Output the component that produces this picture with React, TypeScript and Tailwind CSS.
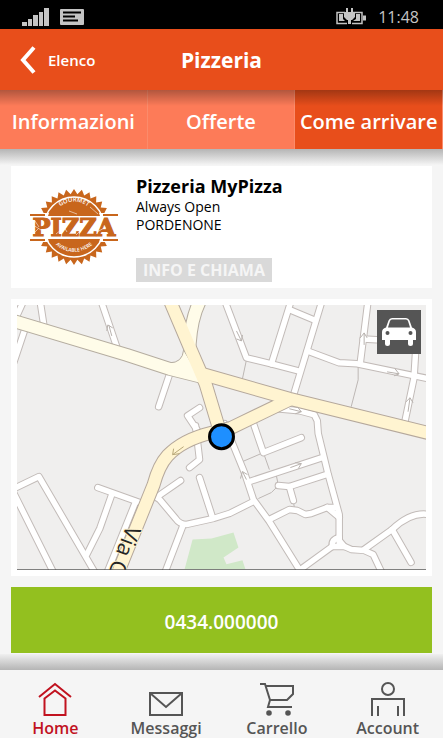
import React, { useState } from "react";

const tabs = ["Informazioni", "Offerte", "Come arrivare"];

// White streets, drawn twice: grey casing first, then the white fill
const streets = [
  "M40 300L44 326",
  "M26 326L14 362",
  "M24 300L14 322",
  "M101 300L118 350",
  "M170 374L159 407",
  "M200 408L188 416L200 434",
  "M225 300L247 358L272 364L299 371",
  "M292 300L272 364",
  "M323 300L294 396",
  "M291 310L315 320",
  "M308 351L340 363L358 364L430 379",
  "M369 300L361 364",
  "M364 339L382 340",
  "M417 345L415 378L405 426",
  "M278 409L300 411L315 415L318 421L319 434L329 475L340 515L340 543",
  "M252 418L264 453L302 438",
  "M225 424L245 473L254 500L270 522L303 575",
  "M250 482L323 458",
  "M279 486L290 487L327 475",
  "M290 487L294 501",
  "M270 520L290 510L298 511L306 515L312 514L328 508L335 508",
  "M328 508L340 518",
  "M254 502L230 514L214 519L187 525Q180 525 176 519L160 500L154 496",
  "M340 538Q332 540 333 547L345 547L340 541",
  "M333 547L300 571",
  "M343 546L352 550L365 551L374 555L383 574",
  "M365 550L393 530Q412 512 430 515",
  "M393 530L412 563",
  "M12 490L39 477L95 573",
  "M12 490L54 574",
  "M98 488L140 503",
  "M112 495L100 529L87 555",
  "M136 502L107 574",
  "M158 497L181 481",
  "M200 478L213 518",
  "M196 426L200 460L190 468",
  "M183 527L165 574",
];

const footpaths =
  "M247 360L243 379M359 367L359 380L352 407M243 462L264 453L270 470M277 476L279 486L272 493L259 499M294 501L295 508";

const mainRoads = [
  "M170 300L190 347L206 384L222 437",
  "M202 374L290 399L432 434",
  "M290 400L232 428L212 433Q183 440 168 456Q159 466 154 485L118 574",
];

const lightRoads = ["M10 320L127 355L170 369L202 377", "M202 298Q192 315 190 345"];

function StreetMap() {
  return (
    <svg viewBox="17 305 410 266" className="block w-full" role="img" aria-label="Mappa">
      <rect x="17" y="305" width="410" height="266" fill="#f0efee" />
      <path d="M193 540L212 539L234 533L239 548L224 558L227 565L243 561L246 570H185Z" fill="#d0e8c8" />
      <path d={footpaths} fill="none" stroke="#bdb7b4" strokeWidth="1" />
      <g fill="none" strokeLinecap="round" strokeLinejoin="round">
        {streets.map((d) => (
          <path key={d} d={d} stroke="#c2bbb8" strokeWidth="7.500" />
        ))}
        {streets.map((d) => (
          <path key={d} d={d} stroke="#ffffff" strokeWidth="5.500" />
        ))}
        {lightRoads.map((d) => (
          <path key={d} d={d} stroke="#b5ada0" strokeWidth="14" />
        ))}
        {mainRoads.map((d) => (
          <path key={d} d={d} stroke="#b5a89c" strokeWidth="14" />
        ))}
        <path d="M170 363Q183 363 184 350L201 379L171 374Z" fill="#fffce9" stroke="#b5ada0" />
        {lightRoads.map((d) => (
          <path key={d} d={d} stroke="#fffce9" strokeWidth="12" />
        ))}
        {mainRoads.map((d) => (
          <path key={d} d={d} stroke="#fff4d1" strokeWidth="12" />
        ))}
      </g>
      <g fill="none" stroke="#b8b2ae" strokeWidth="1">
        <path d="M112 336L109 325M107 331L108 325L113 328" />
        <path d="M237 331L242 341M243 335L242 341L237 339" />
        <path d="M365 345L365 333M361 338L365 333L368 338" />
        <path d="M388 372L400 374M396 369L400 374L395 376" />
        <path d="M409 412L411 398M407 402L411 398L414 403" />
        <path d="M290 409L302 412M298 407L302 412L296 414" />
        <path d="M247 480L243 472M241 479L243 472L248 475" />
        <path d="M291 468L302 464M296 463L302 464L299 469" />
        <path d="M184 447L173 455M174 449L173 455L180 454" stroke="#b8a878" />
      </g>
      <text
        transform="translate(127 525) rotate(111)"
        fontFamily="'Open Sans', sans-serif"
        fontSize="22"
        fill="#252525"
        stroke="#fff4d1"
        strokeWidth="2"
        paintOrder="stroke"
      >
        Via C
      </text>
      <rect x="17" y="570" width="410" height="1" fill="#444" />
      <circle cx="222" cy="437" r="12" fill="#1e8fff" stroke="#000" strokeWidth="3" />
    </svg>
  );
}

// Points of the seal's jagged edge
const sealPoints = Array.from({ length: 60 }, (_, i) => {
  const r = i % 2 === 0 ? 38 : 33;
  const a = (i * Math.PI) / 30;
  return `${(44 + r * Math.sin(a)).toFixed(1)},${(38 - r * Math.cos(a)).toFixed(1)}`;
}).join(" ");

function PizzaLogo() {
  return (
    <svg viewBox="0 0 88 76" className="w-[88px]" role="img" aria-label="Pizza">
      <defs>
        <path id="arcTop" d="M23 28A22 22 0 0 1 65 28" />
        <path id="arcBottom" d="M19 46A27 27 0 0 0 69 46" />
      </defs>
      <polygon points={sealPoints} fill="#c8661c" />
      <circle cx="44" cy="38" r="30" fill="none" stroke="#fff" strokeWidth="1.500" />
      <rect x="0" y="24" width="88" height="29" fill="#fff" />
      <path d="M19 24H69L70 27H18ZM18 50H70L69 53H19Z" fill="#c8661c" />
      <path d="M0 26H15M73 26H88M0 51H15M73 51H88" stroke="#c8661c" strokeWidth="2" />
      <text
        x="44"
        y="47"
        textAnchor="middle"
        fontFamily="'DejaVu Serif', serif"
        fontSize="24"
        fontWeight="700"
        fill="#c8661c"
        stroke="#c8661c"
        strokeWidth="1.200"
      >
        PIZZA
      </text>
      <g fill="#fff" fontFamily="'Open Sans', sans-serif" fontSize="6" fontWeight="600" textAnchor="middle">
        <text>
          <textPath href="#arcTop" startOffset="50%">GOURMET</textPath>
        </text>
        <text fontSize="5">
          <textPath href="#arcBottom" startOffset="50%">AVAILABLE HERE</textPath>
        </text>
      </g>
      <path
        d="M3 36L11 41M5 32L9 38M31 33L37 43M49 40L56 34M67 43L76 38M4 44L9 39M60 18L68 25M39 22L47 25M26 45L31 41M46 46L50 42"
        stroke="#fff"
        strokeWidth=".8"
        opacity=".7"
      />
    </svg>
  );
}

function StatusBar() {
  return (
    <div className="flex h-[29px] items-center justify-between bg-black pr-6 pl-[22px] pt-1">
      <div className="flex items-center gap-[11px]">
        <svg width="27" height="18" viewBox="0 0 27 18" fill="#c4c4c4">
          <path d="M0 14h5v4H0zM6 11h4v7H6zM11 7h5v11h-5zM17 4h4v14h-4zM22 0h5v18h-5z" />
        </svg>
        <svg width="24" height="16" viewBox="0 0 24 16">
          <rect width="24" height="16" rx="1" fill="#c4c4c4" />
          <path d="M3 3.500H21M3 7.500H15M3 11.500H18" stroke="#000" strokeWidth="2" />
        </svg>
      </div>
      <div className="flex items-center gap-3">
        <svg width="30" height="18" viewBox="0 0 30 18">
          <path d="M9 4.500H1V15.500H11M17 4.500H26V15.500H16" fill="none" stroke="#c4c4c4" strokeWidth="1.500" />
          <path d="M3 6H7V11L9 13H3ZM20 6H24V13H17L20 11ZM27 7.500H30V12.500H27Z" fill="#c4c4c4" />
          <path d="M10 0H12V4H15V0H17V4H19V9L16 12H15V16H12V12H11L8 9V4H10Z" fill="#c4c4c4" />
        </svg>
        <span className="text-base leading-6 text-[#c4c4c4]">11:48</span>
      </div>
    </div>
  );
}

const navItems = [
  {
    label: "Home",
    icon: <path d="M1 15L17 2L33 15M6.500 16.500L17 8.500L27.500 16.500V33H6.500Z" />,
  },
  {
    label: "Messaggi",
    icon: <path d="M1 11H33V33H1ZM1 11L17 25L33 11" />,
  },
  {
    label: "Carrello",
    icon: (
      <>
        <path d="M0 2H5L10 18L8 25H32M6 4H33V12L27 18H10" />
        <circle cx="9" cy="31" r="1.800" fill="currentColor" />
        <circle cx="28" cy="31" r="1.800" fill="currentColor" />
      </>
    ),
  },
  {
    label: "Account",
    icon: (
      <>
        <circle cx="17" cy="7" r="6" />
        <path d="M1 34V17H33V34M7 24V34M27 24V34" />
      </>
    ),
  },
];

export default function App() {
  const [activeTab, setActiveTab] = useState("Come arrivare");
  const [activeNav, setActiveNav] = useState("Home");

  return (
    <div className="bg-[#f5f5f5] font-['Open_Sans',sans-serif] text-black">
      <StatusBar />
      <header className="grid h-[61px] grid-cols-[1fr_auto_1fr] items-center bg-[#e84e1b] text-white">
        <button type="button" className="flex items-center gap-3 pl-5 text-[15px] leading-6 font-semibold">
          <svg width="16" height="28" viewBox="0 0 16 28" fill="none" stroke="currentColor" strokeWidth="4">
            <path d="M14 1.500L3 14L14 26.500" />
          </svg>
          Elenco
        </button>
        <h1 className="text-[21px] leading-7 font-bold">Pizzeria</h1>
      </header>

      <nav className="relative grid h-[59px] grid-cols-3">
        {tabs.map((tab) => (
          <button
            key={tab}
            type="button"
            onClick={() => setActiveTab(tab)}
            className={`border-r border-[#fb8b6b] pt-1 text-center text-xl font-semibold whitespace-nowrap text-white last:border-r-0 ${
              tab === activeTab ? "bg-[#e84e1b]" : "bg-[#fd7b58]"
            }`}
          >
            {tab}
          </button>
        ))}
        <div className="pointer-events-none absolute inset-x-0 top-0 h-4 bg-gradient-to-b from-black/30 to-transparent" />
      </nav>
      <div className="h-4 bg-gradient-to-b from-[#b5b5b5] to-[#f5f5f5]" />

      <main className="flex flex-col gap-[11px] px-[11px] pt-px">
        <section className="flex h-[122px] bg-white">
          <div className="flex w-[125px] shrink-0 items-center justify-center">
            <PizzaLogo />
          </div>
          <div className="flex flex-col items-start pt-2">
            <h2 className="text-lg leading-6 font-bold">Pizzeria MyPizza</h2>
            <p className="text-sm leading-[18px]">Always Open</p>
            <p className="text-sm leading-[18px]">PORDENONE</p>
            <button
              type="button"
              className="mt-6 h-6 bg-[#d9d9d9] px-[7px] text-base leading-6 font-bold text-[#f5f5f5]"
            >
              INFO E CHIAMA
            </button>
          </div>
        </section>

        <section className="relative bg-white p-1.5">
          <StreetMap />
          <button
            type="button"
            aria-label="Percorso in auto"
            className="absolute top-[11px] right-[11px] flex size-11 items-center justify-center bg-[#555]"
          >
            <svg width="34" height="28" viewBox="0 0 34 28">
              <path
                d="M10 0H24Q26.500 0 27.500 2.500L30 9.500Q34 10.500 34 14V22H31V25.500Q31 28 28.500 28Q26 28 26 25.500V22H8V25.500Q8 28 5.500 28Q3 28 3 25.500V22H0V14Q0 10.500 4 9.500L6.500 2.500Q7.500 0 10 0Z"
                fill="#fff"
              />
              <path d="M10 1.500H24Q25.500 1.500 26 3L28 9.500H6L8 3Q8.500 1.500 10 1.500Z" fill="#555" />
              <circle cx="5.500" cy="15" r="2" fill="#555" />
              <circle cx="28.500" cy="15" r="2" fill="#555" />
            </svg>
          </button>
        </section>

        <a
          href="tel:0434000000"
          className="flex h-[66px] items-center justify-center bg-[#93c01f] pt-1 text-[19px] leading-7 font-semibold text-white"
        >
          0434.000000
        </a>
      </main>

      <div className="mt-px h-4 bg-gradient-to-b from-[#f0f0f0] to-[#b5b5b5]" />
      <nav className="grid h-[68px] grid-cols-4">
        {navItems.map(({ label, icon }) => (
          <button
            key={label}
            type="button"
            onClick={() => setActiveNav(label)}
            className={`flex flex-col items-center pt-3 text-base leading-6 font-semibold whitespace-nowrap ${
              label === activeNav ? "text-[#c1121f]" : "text-[#555]"
            }`}
          >
            <svg width="34" height="34" viewBox="0 0 34 34" fill="none" stroke="currentColor" strokeWidth="2">
              {icon}
            </svg>
            {label}
          </button>
        ))}
      </nav>
    </div>
  );
}
